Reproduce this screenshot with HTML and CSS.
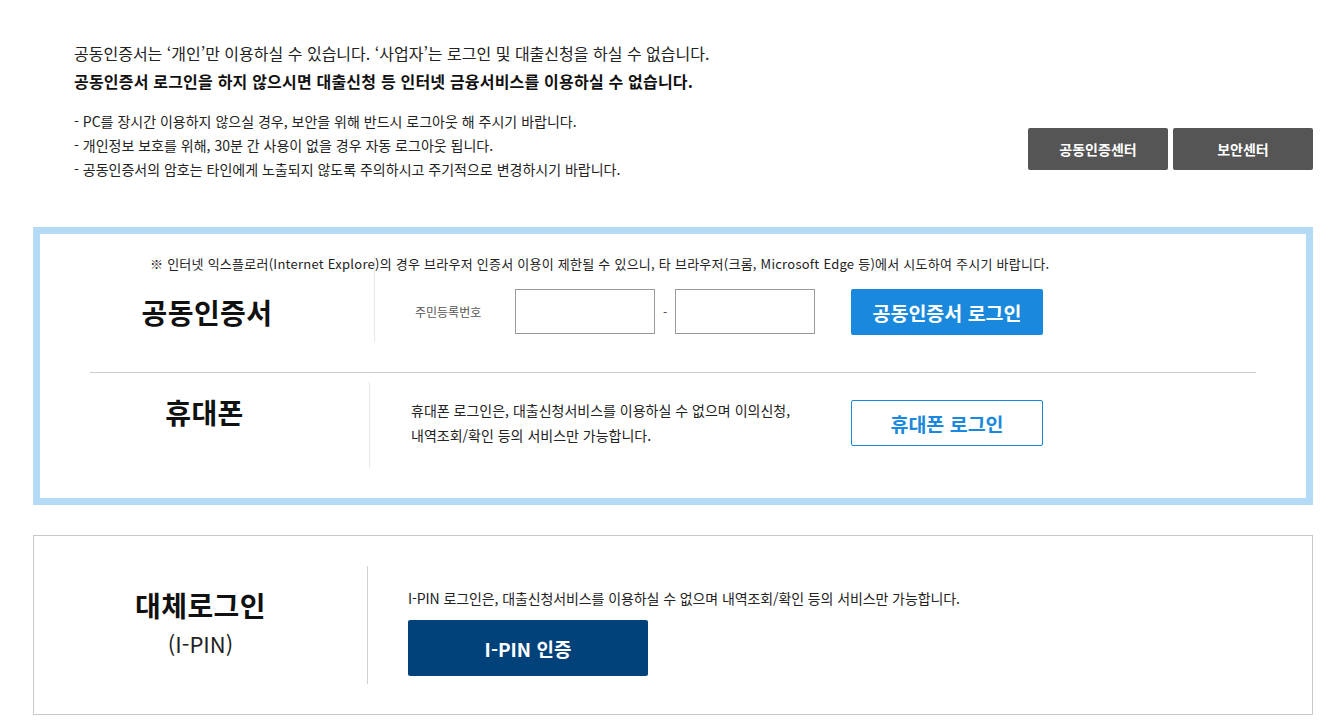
FILE: index.html
```html
<!DOCTYPE html>
<html lang="ko">
<head>
<meta charset="utf-8">
<title>로그인</title>
<link rel="stylesheet" href="styles.css">
</head>
<body>
<div class="page">
  <section class="intro">
    <div class="intro-text">
      <p class="lead">공동인증서는 ‘개인’만 이용하실 수 있습니다. ‘사업자’는 로그인 및 대출신청을 하실 수 없습니다.</p>
      <p class="lead lead-strong">공동인증서 로그인을 하지 않으시면 대출신청 등 인터넷 금융서비스를 이용하실 수 없습니다.</p>
      <ul class="notes">
        <li>- PC를 장시간 이용하지 않으실 경우, 보안을 위해 반드시 로그아웃 해 주시기 바랍니다.</li>
        <li>- 개인정보 보호를 위해, 30분 간 사용이 없을 경우 자동 로그아웃 됩니다.</li>
        <li>- 공동인증서의 암호는 타인에게 노출되지 않도록 주의하시고 주기적으로 변경하시기 바랍니다.</li>
      </ul>
    </div>
    <div class="center-links">
      <a class="dark-btn" href="#">공동인증센터</a>
      <a class="dark-btn" href="#">보안센터</a>
    </div>
  </section>

  <section class="cert-box">
    <p class="browser-notice">※ 인터넷 익스플로러(Internet Explore)의 경우 브라우저 인증서 이용이 제한될 수 있으니, 타 브라우저(크롬, Microsoft Edge 등)에서 시도하여 주시기 바랍니다.</p>
    <div class="login-row row-cert">
      <div class="row-title"><h2>공동인증서</h2></div>
      <div class="row-body">
        <span class="field-label">주민등록번호</span>
        <input class="ssn" type="text" aria-label="주민등록번호 앞자리">
        <span class="dash">-</span>
        <input class="ssn" type="password" aria-label="주민등록번호 뒷자리">
        <button class="btn-primary" type="button">공동인증서 로그인</button>
      </div>
    </div>
    <div class="row-sep"></div>
    <div class="login-row row-phone">
      <div class="row-title"><h2>휴대폰</h2></div>
      <div class="row-body">
        <p class="row-desc">휴대폰 로그인은, 대출신청서비스를 이용하실 수 없으며 이의신청,<br>내역조회/확인 등의 서비스만 가능합니다.</p>
        <button class="btn-outline" type="button">휴대폰 로그인</button>
      </div>
    </div>
  </section>

  <section class="alt-box">
    <div class="alt-title">
      <h2>대체로그인</h2>
      <span class="alt-sub">(I-PIN)</span>
    </div>
    <div class="alt-body">
      <p class="alt-desc">I-PIN 로그인은, 대출신청서비스를 이용하실 수 없으며 내역조회/확인 등의 서비스만 가능합니다.</p>
      <button class="btn-navy" type="button">I-PIN 인증</button>
    </div>
  </section>
</div>
</body>
</html>
```

FILE: styles.css
```css
* { box-sizing: border-box; }

html, body {
  margin: 0;
  padding: 0;
  background: #fff;
}

body {
  font-family: "Noto Sans CJK KR", "Noto Sans", sans-serif;
  color: #222;
}

p, ul, h2 { margin: 0; padding: 0; }

.page {
  width: 1280px;
  margin-left: 33px;
}

/* intro */
.intro {
  display: flex;
  justify-content: space-between;
  align-items: flex-end;
  padding: 39px 0 0 41px;
}

.lead {
  font-size: 16px;
  line-height: 28px;
  color: #222;
}

.lead-strong {
  font-weight: 700;
  color: #111;
  letter-spacing: 0.2px;
}

.notes {
  list-style: none;
  margin-top: 14px;
  font-size: 14px;
  line-height: 24px;
  color: #222;
}

.center-links {
  display: flex;
  gap: 5px;
  margin-bottom: 11px;
}

.dark-btn {
  display: flex;
  align-items: center;
  justify-content: center;
  width: 140px;
  height: 42px;
  background: #555;
  color: #fff;
  font-size: 14px;
  font-weight: 700;
  text-decoration: none;
  border-radius: 2px;
}

/* certificate box */
.cert-box {
  position: relative;
  margin-top: 46px;
  border: 7px solid #b5daf5;
  padding: 22px 0 30px;
}

.browser-notice {
  position: absolute;
  top: 20px;
  left: 110px;
  font-size: 13px;
  line-height: 20px;
  letter-spacing: 0.25px;
  color: #222;
  white-space: nowrap;
}

.login-row {
  display: flex;
  height: 86px;
}

.row-title h2 {
  font-size: 28px;
  line-height: 34px;
  font-weight: 700;
  letter-spacing: 0.4px;
  color: #111;
  text-align: center;
}

.row-body {
  display: flex;
  align-items: flex-start;
  border-left: 1px solid #e8e8e8;
}

.row-cert .row-title { width: 334px; padding-top: 39px; }
.row-cert .row-body { padding: 33px 0 0 40px; }

.field-label {
  width: 100px;
  font-size: 12px;
  line-height: 45px;
  color: #555;
}

.ssn {
  width: 140px;
  height: 45px;
  border: 1px solid #999;
  background: #fff;
  margin: 0;
  padding: 0 8px;
  font: inherit;
}

.dash {
  width: 20px;
  text-align: center;
  font-size: 12px;
  line-height: 45px;
  color: #444;
}

.btn-primary {
  margin-left: 36px;
  width: 192px;
  height: 46px;
  border: 0;
  border-radius: 2px;
  background: #1a88dc;
  color: #fff;
  font-family: inherit;
  font-size: 19.5px;
  font-weight: 700;
  cursor: pointer;
}

.row-sep {
  height: 1px;
  background: #cccccc;
  margin: 30px 50px 0;
}

.row-phone { margin-top: 9px; }
.row-phone .row-title { width: 329px; padding-top: 13px; }
.row-phone .row-body { padding: 16px 0 0 41px; }

.row-desc {
  width: 440px;
  font-size: 14px;
  line-height: 25px;
  color: #222;
}

.btn-outline {
  margin-top: 2px;
  width: 192px;
  height: 46px;
  border: 1px solid #1a88dc;
  border-radius: 2px;
  background: #fff;
  color: #1a88dc;
  font-family: inherit;
  font-size: 19.5px;
  font-weight: 700;
  cursor: pointer;
}

/* alternative login */
.alt-box {
  display: flex;
  margin-top: 30px;
  border: 1px solid #c8c8c8;
  padding: 30px 0;
}

.alt-title {
  width: 333px;
  height: 118px;
  display: flex;
  flex-direction: column;
  align-items: center;
  justify-content: center;
}

.alt-title h2 {
  font-size: 28px;
  line-height: 36px;
  font-weight: 700;
  letter-spacing: 0.4px;
  color: #111;
}

.alt-sub {
  font-size: 22px;
  line-height: 40px;
  color: #222;
}

.alt-body {
  border-left: 1px solid #d0d0d0;
  padding: 22px 0 0 40px;
  height: 118px;
}

.alt-desc {
  font-size: 14px;
  line-height: 20px;
  letter-spacing: -0.1px;
  color: #222;
}

.btn-navy {
  display: block;
  margin-top: 12px;
  width: 240px;
  height: 56px;
  border: 0;
  border-radius: 2px;
  background: #02427a;
  color: #fff;
  font-family: inherit;
  font-size: 19px;
  font-weight: 700;
  cursor: pointer;
}
```
